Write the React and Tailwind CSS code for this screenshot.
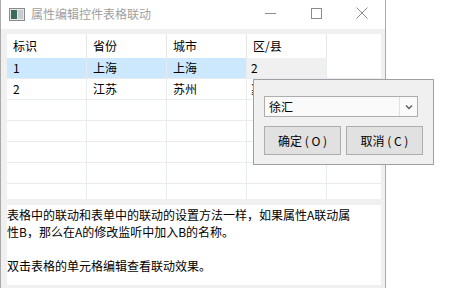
import React from 'react';

const cols = ['标识', '省份', '城市', '区/县', ''];
const rows = [
  ['1', '上海', '上海', '2', ''],
  ['2', '江苏', '苏州', '嘉定', ''],
  ['', '', '', '', ''],
  ['', '', '', '', ''],
  ['', '', '', '', ''],
  ['', '', '', '', ''],
  ['', '', '', '', ''],
];

function AppIcon() {
  return (
    <svg width="16" height="13" viewBox="0 0 16 13">
      <rect x="0.5" y="0.5" width="15" height="12" fill="#e8e8e8" stroke="#8a8a8a" />
      <rect x="2" y="2" width="6" height="9" fill="#3d6b5a" />
      <rect x="9" y="2" width="5" height="9" fill="#c8ccd0" />
    </svg>
  );
}

export default function App() {
  return (
    <div
      className="w-[449px] h-[288px] bg-white overflow-hidden"
      style={{ fontFamily: '"Noto Sans CJK SC", "Noto Sans", sans-serif' }}
    >
      <div className="relative w-[386px] h-[288px] border-x border-[#aaaaaa] flex flex-col">
        {/* title bar */}
        <div className="h-[29px] bg-white flex items-center shrink-0">
          <div className="ml-[8px] mr-[6px] flex items-center">
            <AppIcon />
          </div>
          <span className="text-[12px] leading-[14px] text-[#a0a0a0] mb-[2px]">属性编辑控件表格联动</span>
          <div className="ml-auto flex items-center">
            <div className="w-[46px] h-[29px] flex items-center justify-center">
              <div className="w-[11px] h-px bg-[#8c8c8c] mb-[3px]" />
            </div>
            <div className="w-[46px] h-[29px] flex items-center justify-center">
              <div className="w-[11px] h-[11px] border border-[#8c8c8c] mb-[3px]" />
            </div>
            <div className="w-[46px] h-[29px] flex items-center justify-center">
              <svg width="12" height="12" viewBox="0 0 12 12" className="mb-[3px]">
                <path d="M0.5 0.5 L11.5 11.5 M11.5 0.5 L0.5 11.5" stroke="#8c8c8c" strokeWidth="1" />
              </svg>
            </div>
          </div>
        </div>

        {/* body */}
        <div className="flex-1 bg-[#f0f0f0] px-[6px] pt-[5px] flex flex-col">
          <div className="w-[374px] h-[165px] overflow-hidden bg-white">
            <div className="flex h-[24px]">
              {cols.map((c, i) => (
                <div
                  key={i}
                  className={
                    'h-full flex items-center pl-[6px] text-[12px] text-black bg-white ' +
                    (i < 4 ? 'w-[80px] border-r border-[#e5e5e5]' : 'flex-1')
                  }
                >
                  {c}
                </div>
              ))}
            </div>
            {rows.map((r, ri) => (
              <div key={ri} className="flex h-[21px]">
                {r.map((v, ci) => {
                  let bg = 'bg-white';
                  if (ri === 0 && ci < 3) bg = 'bg-[#cce8ff]';
                  if (ri === 0 && ci === 3) bg = 'bg-[#f0f0f0]';
                  return (
                    <div
                      key={ci}
                      className={
                        'h-full flex items-center text-[12px] text-black border-b border-[#e8ecf0] ' +
                        bg +
                        ' ' +
                        (ci === 3 ? 'pl-[4px] ' : 'pl-[6px] ') +
                        (ci < 4 ? 'w-[80px] border-r' : 'flex-1')
                      }
                    >
                      {v}
                    </div>
                  );
                })}
              </div>
            ))}
          </div>

          <div className="mt-[6px] w-[374px] h-[80px] bg-white text-[12px] leading-[17px] text-black pt-[1px]">
            <p>表格中的联动和表单中的联动的设置方法一样，如果属性A联动属</p>
            <p>性B，那么在A的修改监听中加入B的名称。</p>
            <p className="h-[17px]" />
            <p>双击表格的单元格编辑查看联动效果。</p>
          </div>
        </div>

        {/* editor popup */}
        <div className="absolute left-[252px] top-[79px] w-[181px] h-[86px] bg-[#f0f0f0] border border-[#a0a0a0] px-[10px] pt-[16px]">
          <div className="w-[154px] h-[21px] border border-[#adadad] bg-[#fafafa] flex items-center">
            <span className="flex-1 pl-[4px] text-[12px] text-black">徐汇</span>
            <div className="w-[18px] h-full border-l border-[#e0e0e0] flex items-center justify-center">
              <svg width="8" height="6" viewBox="0 0 8 6">
                <path d="M1 1.5 L4 4.5 L7 1.5" stroke="#606060" strokeWidth="1.5" fill="none" />
              </svg>
            </div>
          </div>
          <div className="mt-[9px] flex gap-[5px]">
            <div className="w-[78px] h-[29px] bg-[#e1e1e1] border border-[#adadad] flex items-center justify-center text-[12px] text-black whitespace-pre">
              {'确定 ( O )'}
            </div>
            <div className="w-[78px] h-[29px] bg-[#e1e1e1] border border-[#adadad] flex items-center justify-center text-[12px] text-black whitespace-pre">
              {'取消 ( C )'}
            </div>
          </div>
        </div>
      </div>
    </div>
  );
}
